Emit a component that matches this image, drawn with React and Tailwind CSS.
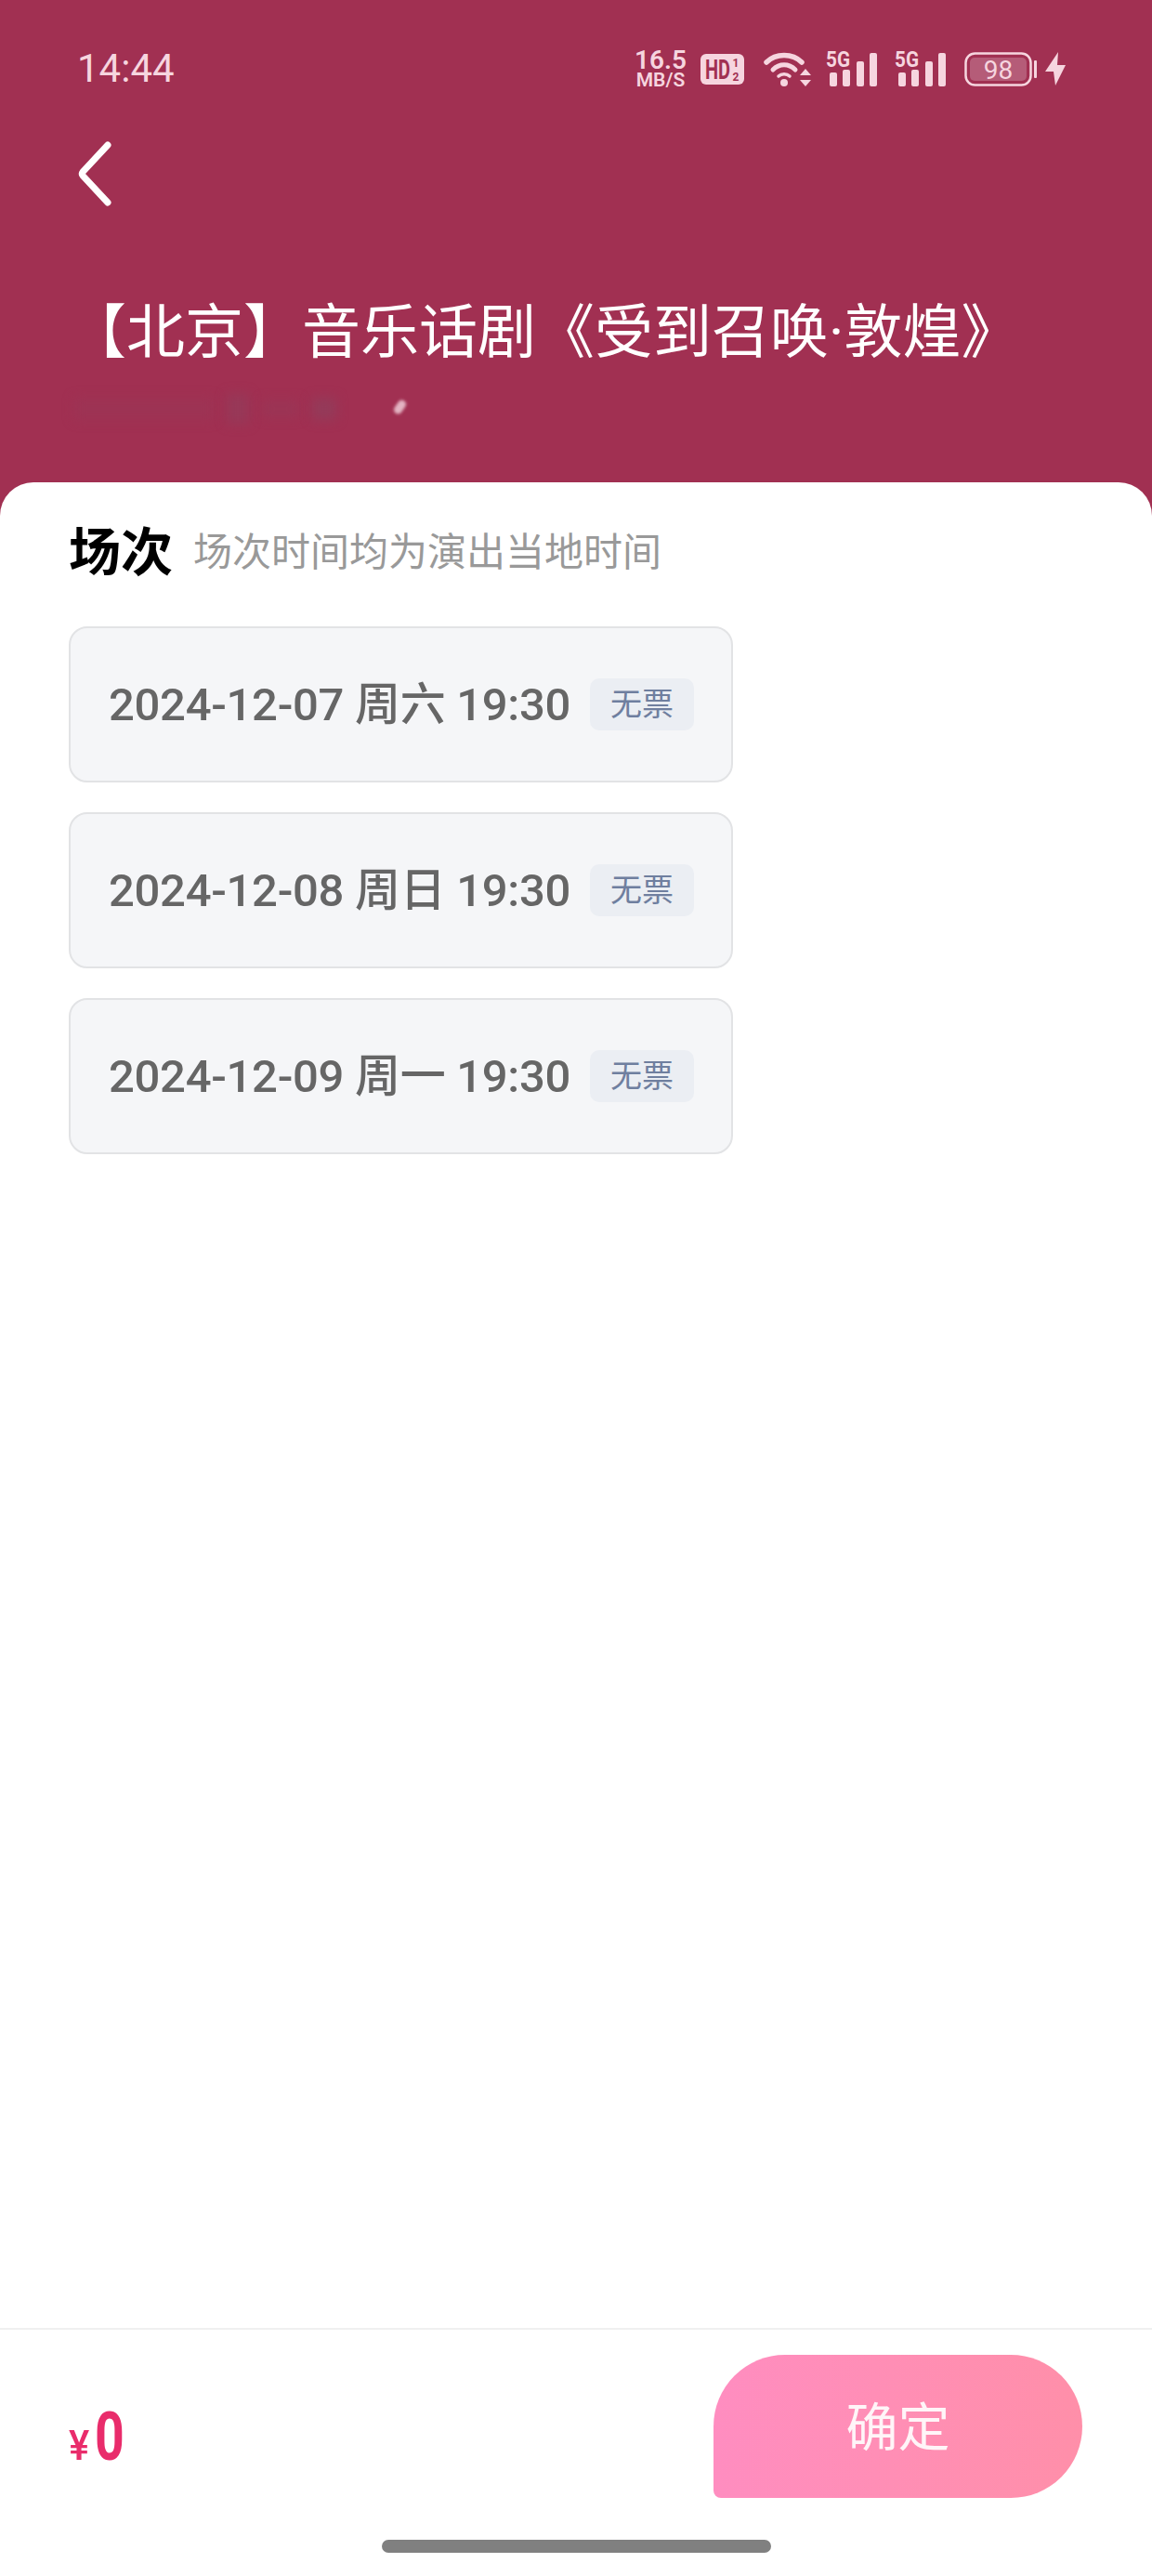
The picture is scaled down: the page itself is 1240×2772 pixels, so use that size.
const sans = { fontFamily: '"Roboto","Noto Sans CJK SC",sans-serif' };
const PINK = '#f6d5df';

function Signal() {
  return (
    <svg width="56" height="40" viewBox="0 0 56 40" fill={PINK} className="block overflow-visible">
      <text x="0" y="18" fontSize="24" fontWeight="700" fontFamily="Roboto" textLength="26" lengthAdjust="spacingAndGlyphs">5G</text>
      <rect x="4" y="24" width="8" height="15" rx="2" />
      <rect x="18" y="21" width="8" height="18" rx="2" />
      <rect x="33" y="12" width="8" height="27" rx="2" />
      <rect x="47" y="3" width="8" height="36" rx="2" />
    </svg>
  );
}

function Wifi() {
  return (
    <svg width="53" height="40" viewBox="0 0 53 40" fill="none" className="block">
      <path d="M3 13 C 13 3, 31 3, 41 13" stroke={PINK} strokeWidth="5.5" strokeLinecap="round" />
      <path d="M10 21 C 17 14, 27 14, 34 21" stroke={PINK} strokeWidth="5" strokeLinecap="round" />
      <path d="M16 28 C 19 25, 25 25, 28 28" stroke={PINK} strokeWidth="3.5" strokeLinecap="round" />
      <circle cx="22" cy="35" r="4" fill={PINK} />
      <path d="M39 27 L45 20 L51 27 Z M39 32 L51 32 L45 39 Z" fill={PINK} />
    </svg>
  );
}

function HdBadge() {
  return (
    <svg width="47" height="33" viewBox="0 0 47 33" className="block">
      <rect width="47" height="33" rx="6" fill={PINK} />
      <text transform="translate(5 27) scale(1 1.5)" fontSize="20" fontWeight="700" fontFamily="Roboto" fill="#a13052">HD</text>
      <text x="38" y="14" textAnchor="middle" fontSize="12" fontWeight="700" fontFamily="Roboto" fill="#a13052">1</text>
      <text x="38" y="29" textAnchor="middle" fontSize="12" fontWeight="700" fontFamily="Roboto" fill="#a13052">2</text>
    </svg>
  );
}

function Battery() {
  return (
    <svg width="78" height="37" viewBox="0 0 78 37" className="block">
      <rect x="1.5" y="1.5" width="70" height="34" rx="10" fill="none" stroke={PINK} strokeWidth="2.5" />
      <rect x="6" y="6" width="61" height="25" rx="5" fill="#b55c78" />
      <text x="36.5" y="29" textAnchor="middle" fontSize="28" fontFamily="Roboto" fill={PINK}>98</text>
      <rect x="75" y="9" width="3" height="19" rx="1" fill={PINK} />
    </svg>
  );
}

function StatusBar() {
  return (
    <div className="flex h-[50px] items-center justify-between pl-[83px] pr-[93px] text-[#f6d5df]">
      <span className="text-[42px] leading-none" style={sans}>14:44</span>
      <div className="flex items-center">
        <div className="flex w-[54px] flex-col items-center font-semibold" style={sans}>
          <span className="text-[28px] leading-[25px]">16.5</span>
          <span className="text-[21px] leading-[19px]">MB/S</span>
        </div>
        <div className="ml-[16px]"><HdBadge /></div>
        <div className="ml-[21px]"><Wifi /></div>
        <div className="ml-[14px]"><Signal /></div>
        <div className="ml-[18px]"><Signal /></div>
        <div className="ml-[19px]"><Battery /></div>
        <svg width="22" height="36" viewBox="0 0 22 36" fill={PINK} className="ml-[9px] block">
          <path d="M14 0 L0 21 L9 21 L11 36 L22 14 L13 14 Z" />
        </svg>
      </div>
    </div>
  );
}

function Smudge() {
  return (
    <div className="relative ml-[80px] mt-[22px] flex h-[40px] w-[360px] items-center gap-[14px]">
      <div className="h-[24px] w-[150px] bg-[#9d3354] blur-[6px]" />
      <div className="h-[32px] w-[24px] bg-[#973858] blur-[6px]" />
      <div className="h-[18px] w-[40px] bg-[#9b3455] blur-[6px]" />
      <div className="h-[24px] w-[26px] bg-[#943a59] blur-[6px]" />
      <div className="absolute left-[346px] top-[10px] h-[16px] w-[9px] rotate-[35deg] rounded-full bg-[#e3b3c2] blur-[1.5px]" />
    </div>
  );
}

function Session({ date }) {
  return (
    <div className="flex h-[168px] w-[715px] items-center justify-between rounded-[20px] border-2 border-[#e2e3e5] bg-[#f5f6f8] pl-[41px] pr-[40px]">
      <span className="whitespace-nowrap text-[49px] font-medium leading-none tracking-[-0.3px] text-[#666666]" style={sans}>{date}</span>
      <span className="flex h-[56px] w-[112px] items-center justify-center rounded-[10px] bg-[#ebeef3] text-[34px] text-[#6f7f9f]" style={sans}>无票</span>
    </div>
  );
}

export default function App() {
  return (
    <div className="flex h-[2772px] w-[1240px] flex-col overflow-hidden bg-[#a13052]">
      <header className="h-[519px] shrink-0 pt-[49px]">
        <StatusBar />
        <svg width="40" height="72" viewBox="0 0 40 72" fill="none" className="ml-[83px] mt-[52px] block">
          <path d="M33 5 L6 34 Q4.500 36 6 38 L33 67" stroke="#ffffff" strokeWidth="7" strokeLinecap="round" />
        </svg>
        <h1 className="mt-[95px] whitespace-nowrap pl-[73px] text-[63px] font-normal leading-[80px] text-white" style={sans}>
          【北京】音乐话剧《受到召唤·敦煌》
        </h1>
        <Smudge />
      </header>

      <main className="flex flex-1 flex-col rounded-t-[36px] bg-white">
        <div className="flex-1 px-[74px] pt-[46px]">
          <div className="flex h-[60px] items-center" style={sans}>
            <span className="text-[56px] font-bold leading-none text-black">场次</span>
            <span className="ml-[22px] text-[42px] leading-none text-[#999999]">场次时间均为演出当地时间</span>
          </div>
          <div className="mt-[49px] flex flex-col gap-[32px]">
            <Session date="2024-12-07 周六 19:30" />
            <Session date="2024-12-08 周日 19:30" />
            <Session date="2024-12-09 周一 19:30" />
          </div>
        </div>

        <footer className="h-[267px] border-t-2 border-[#f0f0f0]">
          <div className="flex h-[217px] items-start justify-between pl-[74px] pr-[75px] pt-[27px]">
            <div className="mt-[52px] flex items-baseline font-medium text-[#e92c6b]" style={sans}>
              <span className="inline-block w-[28px] origin-left scale-x-[0.95] text-[44px] leading-none">¥</span>
              <span className="inline-block origin-left scale-x-[0.76] text-[73px] font-bold leading-none">0</span>
            </div>
            <button className="flex h-[154px] w-[397px] items-center justify-center rounded-[77px] rounded-bl-[8px] bg-gradient-to-r from-[#ff8dc0] to-[#ff8fa9] pt-[4px] text-[56px] text-[#fff5f8]" style={sans}>
              确定
            </button>
          </div>
          <div className="mx-auto mt-[9px] h-[14px] w-[419px] rounded-full bg-[#808080]" />
        </footer>
      </main>
    </div>
  );
}
